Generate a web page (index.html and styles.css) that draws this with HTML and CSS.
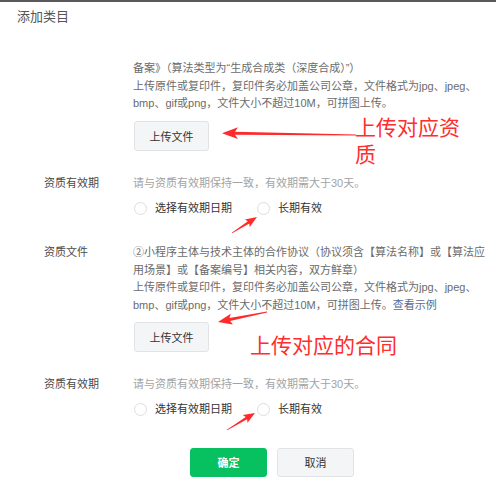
FILE: index.html
```html
<!DOCTYPE html>
<html lang="zh-CN">
<head>
  <meta charset="UTF-8">
  <title>添加类目</title>
  <link rel="stylesheet" href="styles.css">
</head>
<body>
  <div class="dialog">
    <div class="dialog-title">添加类目</div>

    <div class="form">
      <!-- 上一项资质的说明（续） -->
      <div class="field">
        <div class="field-label"></div>
        <div class="field-body">
          <p class="desc">备案》（算法类型为“生成合成类（深度合成）”）</p>
          <p class="desc">上传原件或复印件，复印件务必加盖公司公章，文件格式为jpg、jpeg、bmp、gif或png，文件大小不超过10M，可拼图上传。</p>
          <button type="button" class="btn btn-upload">上传文件</button>
        </div>
      </div>

      <div class="field field-spaced">
        <div class="field-label">资质有效期</div>
        <div class="field-body">
          <p class="hint">请与资质有效期保持一致，有效期需大于30天。</p>
          <div class="radio-group">
            <label class="radio"><span class="radio-dot"></span>选择有效期日期</label>
            <label class="radio"><span class="radio-dot"></span>长期有效</label>
          </div>
        </div>
      </div>

      <div class="field">
        <div class="field-label">资质文件</div>
        <div class="field-body">
          <p class="desc">②小程序主体与技术主体的合作协议（协议须含【算法名称】或【算法应用场景】或【备案编号】相关内容，双方鲜章）</p>
          <p class="desc">上传原件或复印件，复印件务必加盖公司公章，文件格式为jpg、jpeg、bmp、gif或png，文件大小不超过10M，可拼图上传。<a class="link" href="#">查看示例</a></p>
          <button type="button" class="btn btn-upload">上传文件</button>
        </div>
      </div>

      <div class="field">
        <div class="field-label">资质有效期</div>
        <div class="field-body">
          <p class="hint">请与资质有效期保持一致，有效期需大于30天。</p>
          <div class="radio-group">
            <label class="radio"><span class="radio-dot"></span>选择有效期日期</label>
            <label class="radio"><span class="radio-dot"></span>长期有效</label>
          </div>
        </div>
      </div>
    </div>

    <div class="dialog-footer">
      <button type="button" class="btn btn-primary">确定</button>
      <button type="button" class="btn btn-default">取消</button>
    </div>

    <!-- 标注：红色箭头和文字 -->
    <svg class="marks" width="496" height="480" viewBox="0 0 496 480">
      <polygon points="222,133.2 238,127.3 235,131.8 356,134.6 356,135.4 235,134.8 238,139" />
      <polygon points="257,217 249.7,227 249.3,223.5 232.2,233.3 231.8,232.7 247.9,221.3 244.9,219.4" />
      <polygon points="218,322 232.9,324.6 230.1,321.1 267.1,312.5 266.9,311.5 229.5,318.1 230.7,313.8" />
      <polygon points="255,413 247.5,422.8 247.1,419.3 227.2,430.3 226.8,429.7 245.8,417.1 242.8,415.1" />
    </svg>
    <div class="note note-license">上传对应资质</div>
    <div class="note note-contract">上传对应的合同</div>
  </div>
</body>
</html>
```

FILE: styles.css
```css
body {
  margin: 0;
  background: #fff;
  font-family: "Liberation Sans", "Noto Sans CJK SC", sans-serif;
  font-size: 11px;
  color: #333;
}

.dialog {
  position: relative;
  height: 478px;
  border-top: 2px solid #5a5a5a;
  overflow: hidden;
}

.dialog-title {
  padding: 5px 17px 0;
  font-size: 13px;
  line-height: 20px;
  color: #555;
}

.form {
  padding-top: 33px;
}

.field {
  display: flex;
  padding-left: 44px;
  margin-bottom: 24px;
  line-height: 17.5px;
}

.field-spaced {
  margin-bottom: 27px;
}

.field-label {
  flex: 0 0 89px;
  color: #4a4a4a;
}

.field-body {
  width: 358px;
}

.desc,
.hint {
  margin: 0;
}

.desc {
  color: #6b6b6b;
}

.hint {
  color: #a3a3a3;
}

.link {
  color: #576b95;
  text-decoration: none;
}

.btn {
  display: block;
  box-sizing: border-box;
  padding: 0;
  border-radius: 3px;
  font-family: inherit;
  font-size: 11px;
  cursor: pointer;
}

.btn-upload {
  width: 75px;
  height: 30px;
  margin-top: 8px;
  margin-left: 1px;
  background: #f4f5f7;
  border: 1px solid #e2e3e5;
  color: #333;
}

.radio-group {
  display: flex;
  gap: 24px;
  margin-top: 7.5px;
}

.radio {
  display: flex;
  align-items: center;
  color: #333;
}

.radio-dot {
  box-sizing: border-box;
  width: 13px;
  height: 13px;
  margin: 0 8px 0 1px;
  border: 1px solid #dedede;
  border-radius: 50%;
  background: #fff;
}

.dialog-footer {
  display: flex;
  gap: 10px;
  padding-left: 190px;
  margin-top: 29px;
}

.dialog-footer .btn {
  width: 77px;
  height: 29px;
}

.btn-primary {
  background: #07c160;
  border: 1px solid #07c160;
  color: #fff;
  font-weight: bold;
}

.btn-default {
  background: #f4f5f7;
  border: 1px solid #e2e3e5;
  color: #333;
}

/* 标注层 */
.marks {
  position: absolute;
  top: -2px;
  left: 0;
  pointer-events: none;
  fill: #ff2a2a;
}

.note {
  position: absolute;
  font-size: 21px;
  line-height: 27px;
  color: #ff2d2d;
}

.note-license {
  left: 355px;
  top: 112px;
  width: 110px;
}

.note-contract {
  left: 250px;
  top: 330px;
  white-space: nowrap;
}
```
